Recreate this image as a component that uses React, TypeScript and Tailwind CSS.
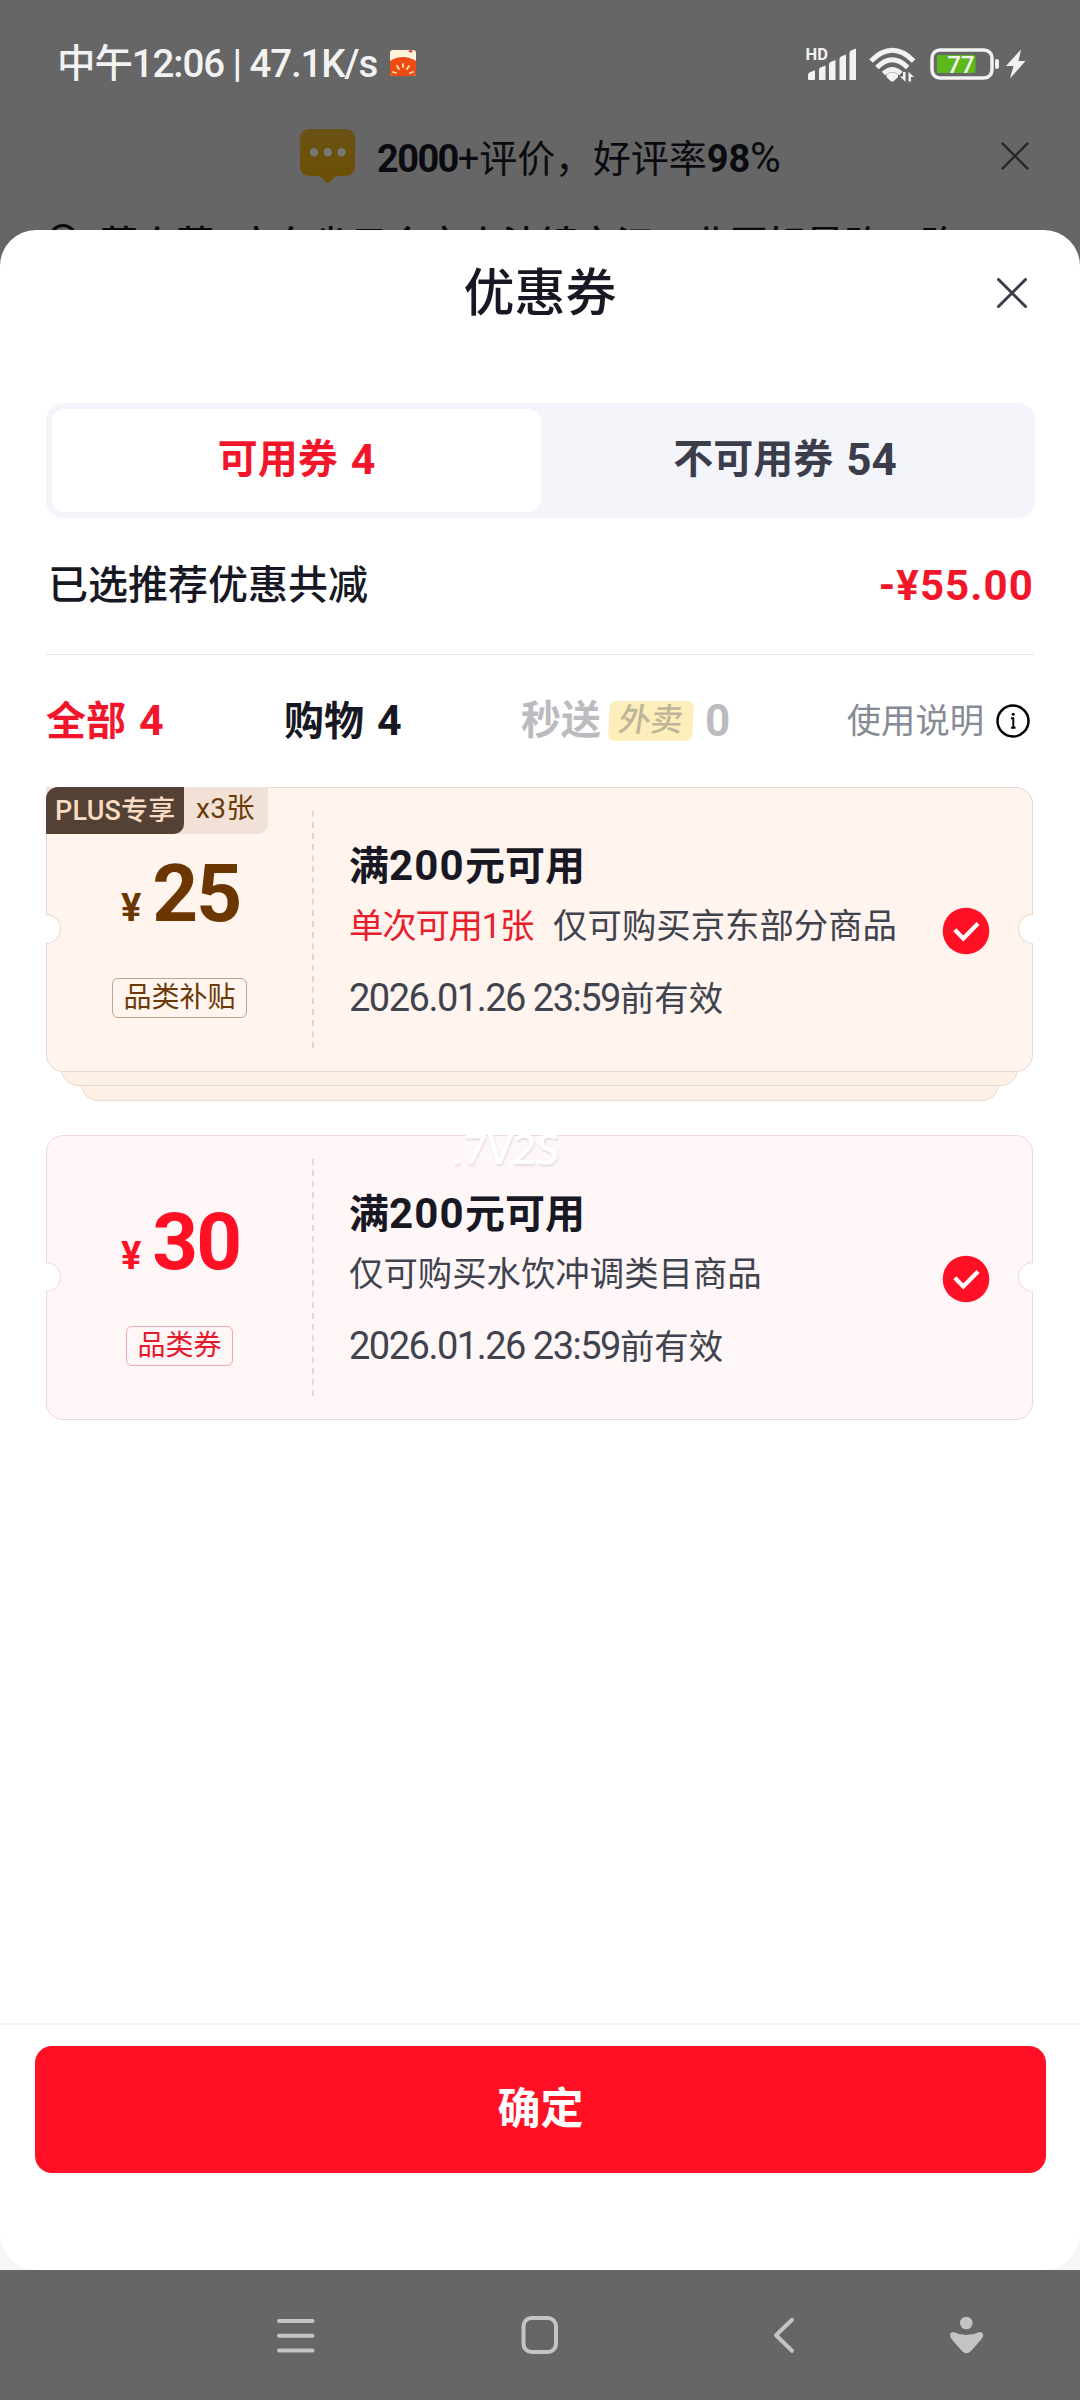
import React from 'react';

type Coupon = {
  amount: string;
  kind: string;
  title: string;
  limit?: string;
  scope: string;
  expires: string;
  plus?: boolean;
  count?: number;
};

const coupons: Coupon[] = [
  {
    amount: '25',
    kind: '品类补贴',
    title: '200',
    limit: '单次可用1张',
    scope: '仅可购买京东部分商品',
    expires: '2026.01.26 23:59',
    plus: true,
    count: 3
  },
  {
    amount: '30',
    kind: '品类券',
    title: '200',
    scope: '仅可购买水饮冲调类目商品',
    expires: '2026.01.26 23:59'
  }
];

const CloseIcon = ({ className, width }: { className: string; width: number }) => (
  <svg viewBox="0 0 30 30" className={className} fill="none" stroke="currentColor" strokeWidth={width}>
    <path d="M1.5 1.5 28.5 28.5M28.5 1.5 1.5 28.5" strokeLinecap="round" />
  </svg>
);

const StatusBar = () => (
  <div className="flex h-[125px] items-center justify-between pr-[54px] pl-[57px] text-[#f2f2f2]">
    <div className="flex items-center">
      <span className="mt-[3px] text-[38.5px] leading-none font-medium tracking-[-1.1px]">
        中午12:06 | 47.1K/s
      </span>
      <svg viewBox="0 0 26 26" className="ml-[13px] size-[26px]">
        <rect width="26" height="26" rx="3" fill="#fff3dc" />
        <path d="M0 11Q13 3 26 11V23a3 3 0 0 1-3 3H3a3 3 0 0 1-3-3Z" fill="#ee4a14" />
        <path d="M18 1l3-1 2 1-2 2z" fill="#d8481c" />
        <path
          d="M13 14v3M7 16l2 3M19 16l-2 3M3 22l3 1M23 22l-3 1"
          stroke="#ffe7b0"
          strokeWidth="1.8"
          strokeLinecap="round"
        />
      </svg>
    </div>
    <svg viewBox="0 0 222 40" className="h-[40px] w-[222px]" fill="#f2f2f2">
      <text x="1.5" y="16.5" fontSize="16.5" fontWeight="700" fontFamily="Roboto, sans-serif">
        HD
      </text>
      <path d="M4 36v-4q0-2 2-2.800l5-2v8.800q0 1-1 1h-5q-1 0-1-1z" />
      <path d="M15 37v-10q0-2 1.500-2.500l5-2v14.500z" />
      <path d="M25 37v-15.500q0-2 1.500-2.500l5-2v20z" />
      <path d="M35.500 37v-21q0-2 1.500-2.500l5-2v25.500z" />
      <path d="M45.500 37v-27q0-2 1.500-2.500l5-2v31.500z" />
      <g fill="none" stroke="#f2f2f2" strokeWidth="5">
        <path d="M67 18Q88.300-3.500 109.600 18" />
        <path d="M73 24.500Q88.300 9 103.600 24.500" />
        <path d="M79.500 30.500Q88.300 22.500 97 30.500" />
      </g>
      <path d="M82.500 31.500Q88.300 27 94 31.500V34L90 38Q88.300 39 86.500 38L82.500 34z" />
      <path d="M96 33.500h3v-4.500h2.500v9.800zM104.500 38.500v-9.800l5.500 5.300h-3v4.500z" />
      <rect x="128" y="7" width="60" height="28" rx="8" fill="none" stroke="#f2f2f2" strokeWidth="3.500" />
      <rect x="133" y="12" width="38.500" height="18" rx="1.500" fill="#5cb81b" />
      <text
        x="157"
        y="29.500"
        fontSize="24"
        fontWeight="500"
        textAnchor="middle"
        fontFamily="Roboto, sans-serif"
      >
        77
      </text>
      <rect x="191" y="16" width="4" height="10" rx="2" />
      <path d="M217 6.500 202 23h7.500l-3.500 12.500 15.500-17.500h-7z" />
    </svg>
  </div>
);

const ReviewStrip = () => (
  <div className="flex h-[62px] items-center pr-[51px] pl-[300px]">
    <svg viewBox="0 0 56 54" className="h-[54px] w-[56px]">
      <defs>
        <linearGradient id="bubble" x1="0" y1="0" x2="0" y2="1">
          <stop offset="0" stopColor="#6a5216" />
          <stop offset="1" stopColor="#6d4e02" />
        </linearGradient>
      </defs>
      <path
        d="M9 0h37a9 9 0 0 1 9 9v29a9 9 0 0 1-9 9h-10l-7 6.500q-1.500 1-3 0l-6-6.500H9a9 9 0 0 1-9-9V9a9 9 0 0 1 9-9z"
        fill="url(#bubble)"
      />
      <g fill="#777">
        <circle cx="14" cy="23.300" r="4.200" />
        <circle cx="27.700" cy="23.300" r="4.200" />
        <circle cx="41.500" cy="23.300" r="4.200" />
      </g>
    </svg>
    <p className="mt-[4px] ml-[21px] text-[38px] leading-none tracking-[-0.1px] whitespace-nowrap text-[#0a0b11]">
      <span className="font-bold tracking-[-1.600px]">2000</span>+评价，好评率
      <span className="font-bold">98</span>
      <span className="text-[42px]">%</span>
    </p>
    <CloseIcon className="ml-auto size-[28px] text-[#24262c]" width={2.4} />
  </div>
);

const Notch = ({ className }: { className: string }) => (
  <span className={`absolute top-[126px] h-[30px] w-[15px] bg-white ${className}`} />
);

const CouponCard = ({ item }: { item: Coupon }) => {
  const line = item.plus ? 'border-[#e9d9cc]' : 'border-[#f0d7dc]';
  const amountColor = item.plus ? 'text-[#6b3600]' : 'text-[#ff1024]';
  return (
    <div className="flex flex-col items-center">
      <div
        className={`relative z-20 flex h-[285px] w-[987px] rounded-[17px] border ${line} ${
          item.plus ? 'bg-[#fff4ee]' : 'bg-[#fff6f7]'
        }`}
      >
        {item.plus && (
          <div className="absolute -top-px -left-px flex h-[47px] rounded-br-[10px] bg-[#f1e1d6] text-[27px] leading-[48px]">
            <span className="w-[138px] rounded-tl-[12px] rounded-br-[10px] bg-[#544136] pl-[9px] font-medium tracking-[0.2px] whitespace-nowrap text-[#fbdcc3]">
              PLUS专享
            </span>
            <span className="w-[84px] pt-px pl-[12px] text-[28px] leading-[42px] tracking-[0.4px] whitespace-nowrap text-[#6b3a06]">
              x{item.count}张
            </span>
          </div>
        )}
        <Notch className={`-left-px rounded-r-full border border-l-0 ${line}`} />
        <Notch className={`-right-px rounded-l-full border border-r-0 ${line}`} />

        <div className="flex w-[265px] flex-col items-center">
          <div className={`mt-[66px] flex h-[95px] items-baseline pl-[2px] leading-[80px] font-bold ${amountColor}`}>
            <span className="mr-[11px] text-[38px]">¥</span>
            <span className="text-[80px] tracking-[-2px]">{item.amount}</span>
          </div>
          <span
            className={`mt-[29px] flex h-[40px] items-center rounded-[6px] border px-[10px] text-[28px] leading-none ${
              item.plus ? 'border-[#c1a48e] text-[#6b3a06]' : 'border-[#f0a9b2] text-[#e8182c]'
            }`}
          >
            {item.kind}
          </span>
        </div>

        <div
          className={`mt-[23px] h-[238px] w-[2px] ${
            item.plus
              ? 'bg-[repeating-linear-gradient(to_bottom,#e8d5c8_0_6px,transparent_6px_11px)]'
              : 'bg-[repeating-linear-gradient(to_bottom,#efd3d9_0_6px,transparent_6px_11px)]'
          }`}
        />

        <div className="flex flex-1 flex-col pt-[52px] pl-[35px] text-[34.400px] text-[#40434e]">
          <h2 className="text-[40px] leading-[52px] font-bold text-[#171823]">
            满<span className="text-[42px] tracking-[1.2px]">{item.title}</span>元可用
          </h2>
          <p className="mt-[9px] flex gap-[20px] leading-[48px] whitespace-nowrap">
            {item.limit && <span className="tracking-[-1.200px] text-[#e8202c]">{item.limit}</span>}
            <span>{item.scope}</span>
          </p>
          <p className="mt-[23px] leading-[50px]">
            <span className="text-[38px] tracking-[-1.500px]">{item.expires}</span>前有效
          </p>
        </div>

        <svg viewBox="0 0 48 48" className="mt-[119px] mr-[42px] size-[48px]">
          <circle cx="24" cy="24" r="23.300" fill="#ff1024" />
          <path d="M12.800 22.800 21.300 31.500 36 16.500" fill="none" stroke="#fff" strokeWidth="4.200" />
        </svg>
      </div>
      {item.count && (
        <>
          <div className={`z-10 -mt-[20px] h-[34px] w-[957px] rounded-b-[17px] border ${line} bg-[#fff0e5]`} />
          <div className={`-mt-[20px] h-[35px] w-[918px] rounded-b-[17px] border ${line} bg-[#fff0e5]`} />
        </>
      )}
    </div>
  );
};

const NavBar = () => (
  <svg viewBox="0 0 1080 130" className="h-[130px] w-[1080px]" fill="none" stroke="#c4c4c4" strokeWidth="4">
    <path d="M279 51h33.500M279 65.700h33.500M279 80.500h33.500" strokeLinecap="round" />
    <rect x="523.500" y="48" width="32.500" height="34" rx="8" />
    <path d="M792 49.800 776 65.200 792 80.800" strokeLinecap="round" strokeLinejoin="round" />
    <g fill="#c4c4c4" stroke="none">
      <circle cx="966.300" cy="53" r="6.300" />
      <path d="M953.500 62Q966 68 979.500 62Q984 62 983 66.500Q982 69 970.500 81.500Q966.500 85 962.500 81.500Q951 69 950.200 66.500Q949.500 62 953.500 62z" />
    </g>
  </svg>
);

export default function App() {
  return (
    <div className="relative flex h-[2400px] w-[1080px] flex-col overflow-hidden bg-[#666] font-[Roboto,'Noto_Sans_CJK_SC',sans-serif]">
      <div className="h-[230px] overflow-hidden">
        <StatusBar />
        <ReviewStrip />
        <div className="mt-[36px] flex items-start pl-[49px] text-[#08090c]">
          <span className="mt-[1px] size-[28px] shrink-0 rounded-full border-[3px] border-current" />
          <p className="mt-[2px] ml-[23px] text-[38px] leading-[40px] font-medium whitespace-nowrap">
            莫小莫<span className="inline-block w-[22px]" />
            广东省云会市小法镇市江工业园好景路，路
          </p>
        </div>
      </div>

      {/* the dimmed page shows at the top corners, the sheet's backing at the bottom ones */}
      <div className="h-[2040px] bg-linear-to-b from-[#666] from-50% to-[#f6f6f6] to-50%">
        <div className="flex h-full flex-col rounded-[36px] bg-white">
          <div className="grid h-[124px] grid-cols-[1fr_auto_1fr] items-center pr-[53px]">
            <h1 className="col-start-2 pt-[3px] pl-[53px] text-[51px] leading-none font-medium text-[#171823]">
              优惠券
            </h1>
            <CloseIcon className="mt-[2px] size-[30px] justify-self-end text-[#3b3e4a]" width={3} />
          </div>

          <div className="mt-[49px] ml-[46px] flex h-[115px] w-[989px] rounded-[17px] bg-[#f4f5fa] p-[6px] text-[40px] font-bold">
            <button className="flex w-[489px] items-center justify-center gap-[13px] rounded-[13px] bg-white pb-[2px] text-[#f3152a]">
              可用券<span className="text-[43px]">4</span>
            </button>
            <button className="flex flex-1 items-center justify-center gap-[13px] pb-[2px] text-[#3b3e4a]">
              不可用券<span className="text-[44px]">54</span>
            </button>
          </div>

          <div className="mx-[46px] flex h-[137px] items-center justify-between border-b border-[#e6e7ea] pl-[2px] text-[40px] font-medium text-[#171823]">
            已选推荐优惠共减
            <span className="pb-[2px] text-[42px] font-bold tracking-[1.100px] text-[#f3152a]">-¥55.00</span>
          </div>

          <div className="mx-[46px] flex h-[132px] items-center text-[40px] leading-[50px] font-bold text-[#171823]">
            <span className="flex w-[238px] items-baseline gap-[13px] text-[#f3152a]">
              全部<span className="text-[43px]">4</span>
            </span>
            <span className="flex w-[237px] items-baseline gap-[13px]">
              购物<span className="text-[43px]">4</span>
            </span>
            <span className="flex items-center text-[#bcbcc0]">
              秒送
              <span className="mx-[8px] h-[40px] w-[84px] -skew-x-3 rounded-[6px] bg-[#fdeebb] text-center text-[32px] leading-[38px] font-medium text-[#bdb698]">
                <span className="inline-block -skew-x-6">外卖</span>
              </span>
              <span className="ml-[4px] text-[44px]">0</span>
            </span>
            <span className="ml-auto flex items-center text-[34.300px] font-normal text-[#868b96]">
              使用说明
              <svg viewBox="0 0 36 36" className="mr-[3px] ml-[11px] size-[36px]" fill="none" stroke="#000">
                <circle cx="18" cy="18" r="15.500" strokeWidth="2.500" />
                <path d="M16 15.300h2.300v7.700q0 1.700 2 1.700M16 24.700h4.500" strokeWidth="1.900" />
                <circle cx="18.200" cy="11.200" r="1.500" fill="#000" stroke="none" />
              </svg>
            </span>
          </div>

          <div className="relative flex w-[1079px] flex-col gap-[34px]">
            {coupons.map((item) => (
              <CouponCard key={item.amount} item={item} />
            ))}
            <span className="absolute top-[335px] left-[452px] z-30 -skew-x-3 font-['Noto_Sans',sans-serif] text-[41.500px] leading-[52px] font-medium text-white [text-shadow:1px_2px_2px_rgba(90,70,75,0.14)]">
              .7V2S
            </span>
          </div>

          <div className="mt-auto h-[247px] border-t-2 border-[#f3f3f5] px-[35px] pt-[21px]">
            <button className="h-[127px] w-[1011px] rounded-[17px] bg-[#ff1024] text-[43px] font-bold text-white">
              确定
            </button>
          </div>
        </div>
      </div>

      <NavBar />
    </div>
  );
}
